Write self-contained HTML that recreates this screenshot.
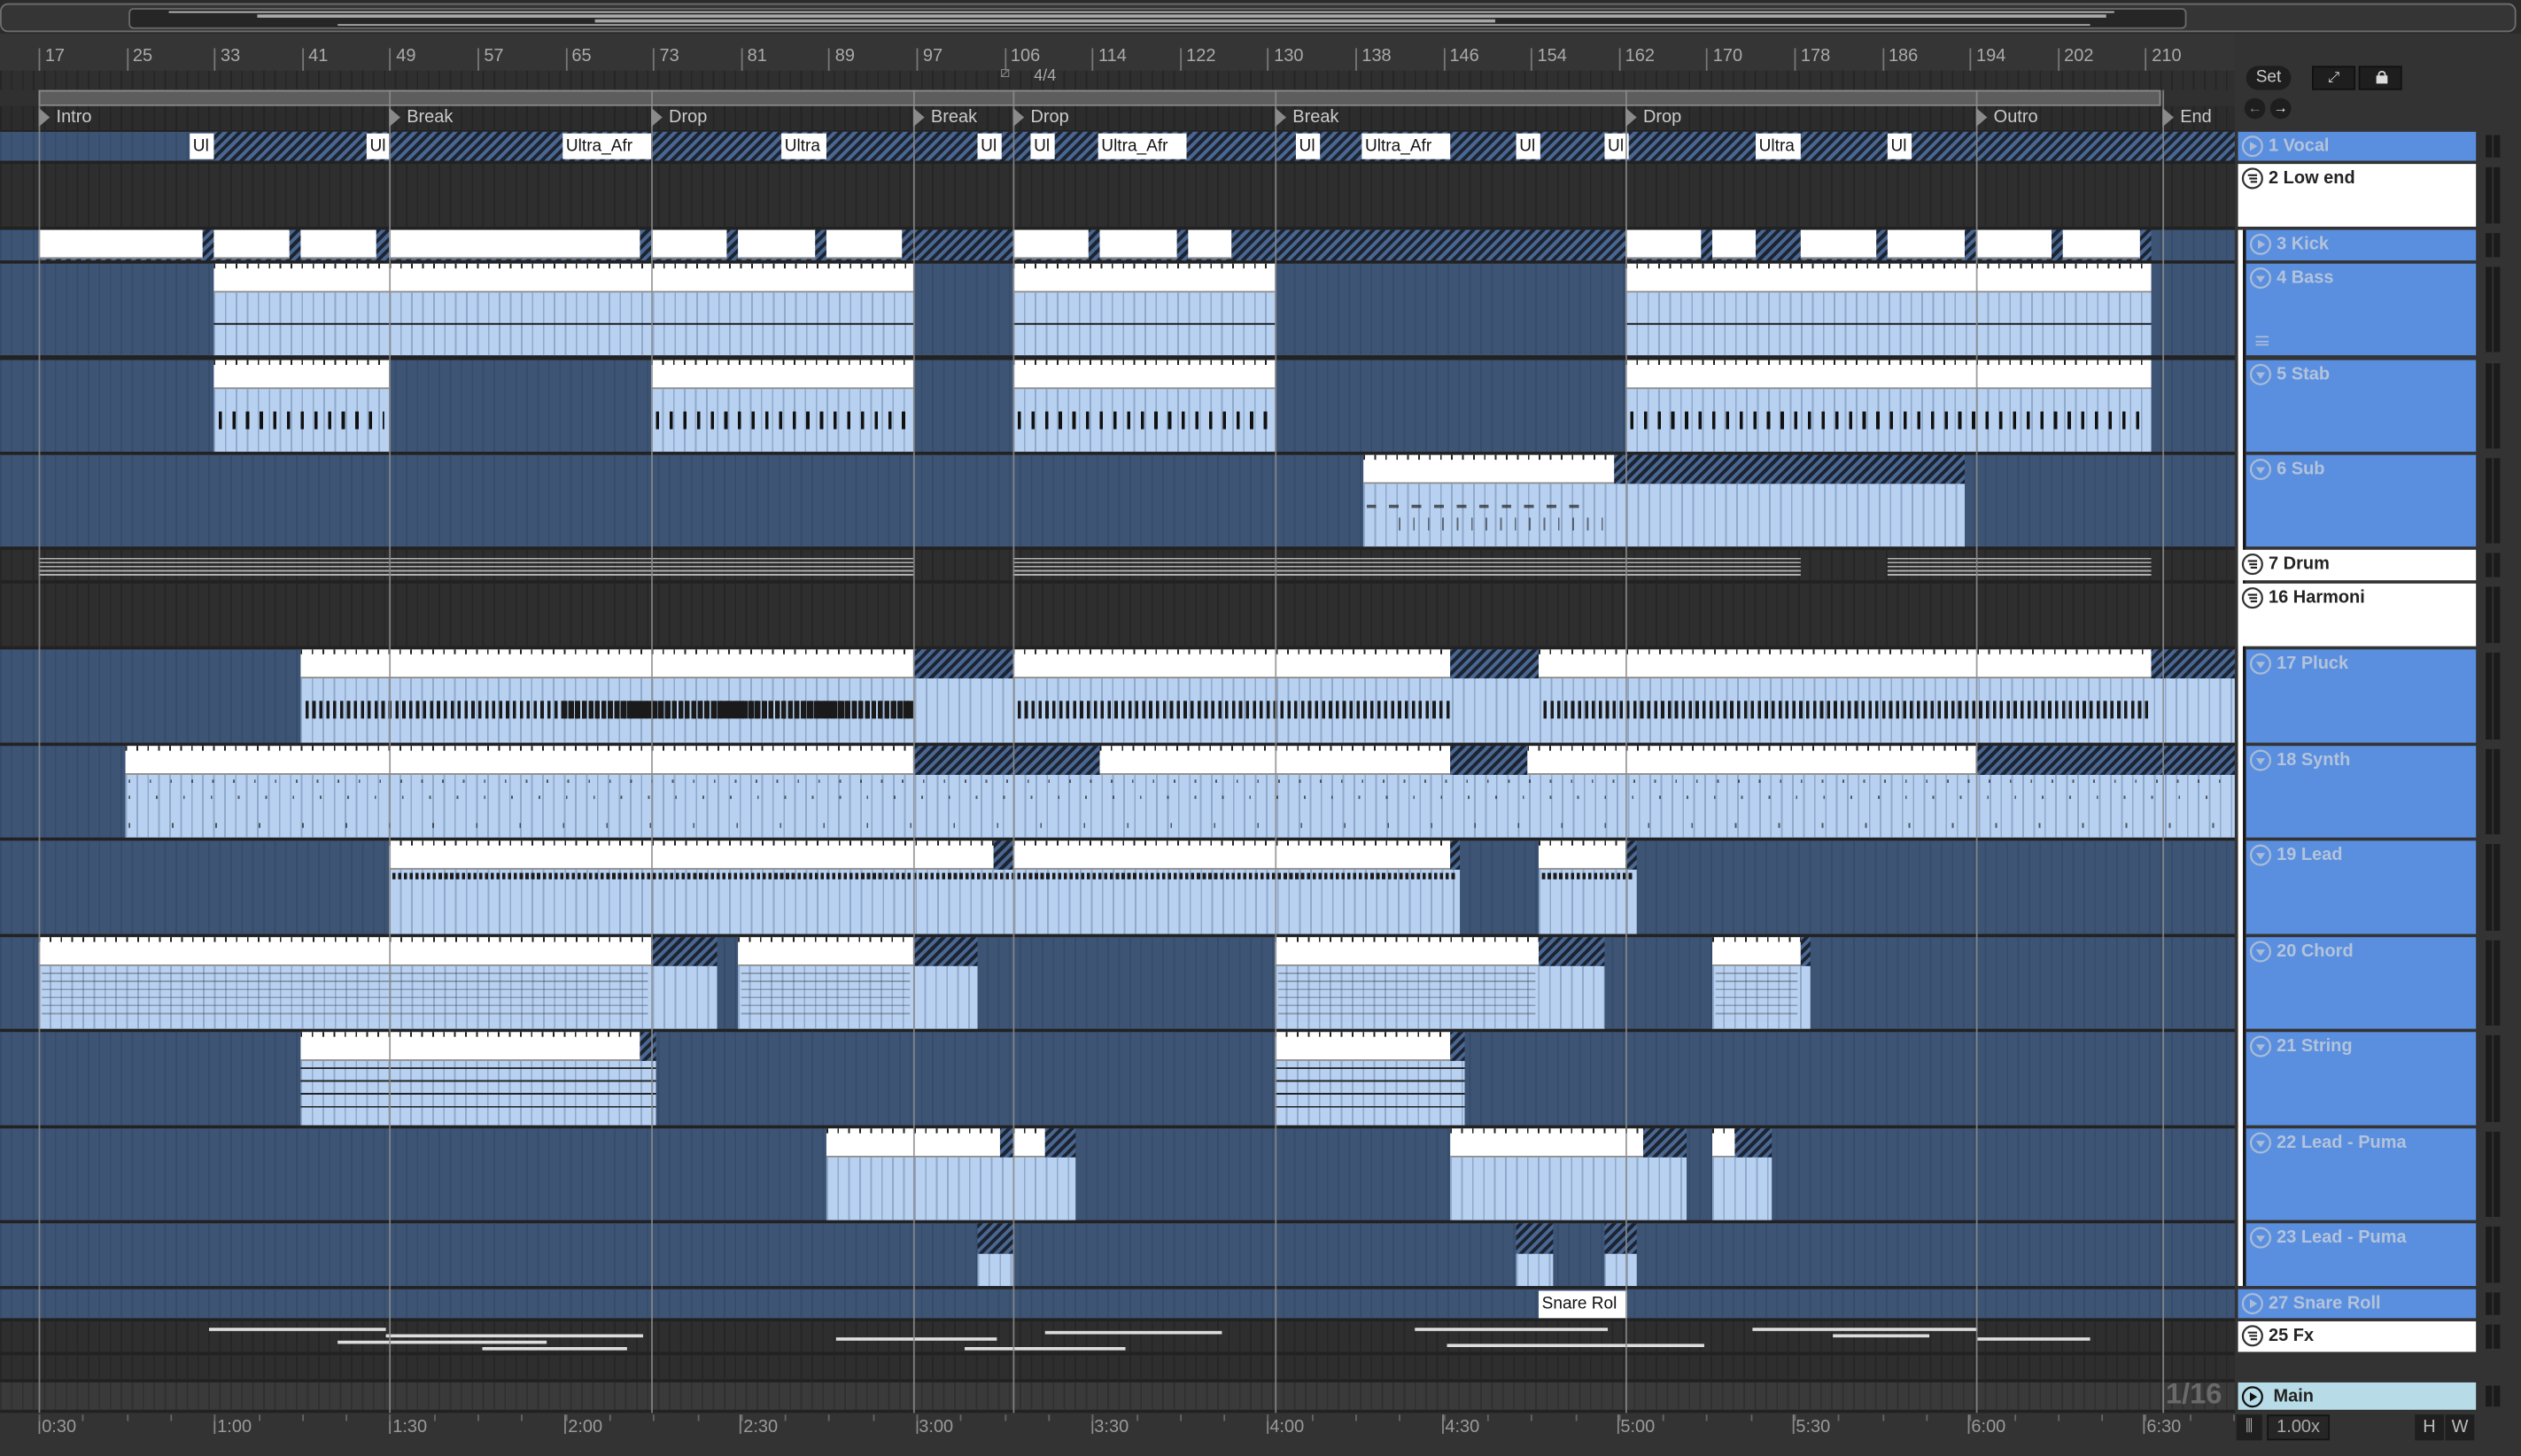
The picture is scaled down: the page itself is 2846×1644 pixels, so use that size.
<!DOCTYPE html>
<html><head><meta charset="utf-8">
<style>
html,body{margin:0;padding:0;background:#2d2d2d;overflow:hidden;width:2846px;height:1644px}
#app{position:absolute;left:0;top:0;width:1568px;height:906px;transform:scale(1.81505);transform-origin:0 0;background:#303030;font-family:"Liberation Sans",sans-serif;overflow:hidden}
.a{position:absolute;box-sizing:border-box}
.hatch{background:repeating-linear-gradient(-45deg,#1c2432 0 2.2px,#4a6791 2.2px 4.4px)}
.blue{background:#3d5475 repeating-linear-gradient(90deg,#364c6b 0 1px,transparent 1px 6.82px)}
.dark{background:#2e2e2e repeating-linear-gradient(90deg,#262626 0 1px,transparent 1px 6.82px)}
.body{background:#b8d1f1 repeating-linear-gradient(90deg,#8fa9cb 0 1px,transparent 1px 6.82px)}
.hdr{background:#fff;border-bottom:1.5px solid #8a8a8a}
.lbl{font-size:10.5px;color:#111;line-height:17px;padding-left:2px;white-space:nowrap;overflow:hidden}
.th{color:#b7c4d8;font-weight:bold;font-size:11px;white-space:nowrap}
</style></head><body>
<div id="app">
<div class="a" style="left:0;top:0;width:1568px;height:21px;background:#2b2b2b"></div>
<div class="a" style="left:0;top:2px;width:1565px;height:18px;border:1.5px solid #6e6e6e;border-radius:5px;background:#353535"></div>
<div class="a" style="left:80px;top:5px;width:1280px;height:13px;background:#262626;border-radius:3px;border:1.5px solid #6a6a6a"></div>
<div class="a" style="left:105px;top:7px;width:1210px;height:1px;background:#bbb"></div>
<div class="a" style="left:160px;top:9px;width:1150px;height:2px;background:#ccc;opacity:.8"></div>
<div class="a" style="left:370px;top:12px;width:560px;height:2px;background:#ddd;opacity:.7"></div>
<div class="a" style="left:210px;top:15px;width:1090px;height:1px;background:#aaa"></div>
<div class="a" style="left:0;top:21px;width:1392px;height:34px;background:#353535"></div>
<div class="a" style="left:0;top:44px;width:1392px;height:12px;background:#2f2f2f repeating-linear-gradient(90deg,#262626 0 1px,transparent 1px 6.82px)"></div>
<div id="ruler"></div>
<div class="a" style="left:24px;top:56px;width:1320px;height:10px;background:#5d5d5d;border:1px solid #8a8a8a"></div>
<div class="a" style="left:0;top:66px;width:1392px;height:15px;background:#2c2c2c repeating-linear-gradient(90deg,#242424 0 1px,transparent 1px 6.82px)"></div>
<div id="loc"></div>
<div id="lanes"></div>
<div id="clips"></div>
<div id="vlines"></div>
<div class="a" style="left:0;top:879px;width:1392px;height:27px;background:#333"></div>
<div id="bot"></div>
<div class="a" style="left:1390px;top:21px;width:178px;height:885px;background:#333"></div>
<div class="a" style="left:1397px;top:41px;width:28px;height:15px;border-radius:8px;background:#1e1e1e;color:#ccc;font-size:10.5px;text-align:center;line-height:15px">Set</div>
<div class="a" style="left:1438px;top:41px;width:27px;height:15px;background:#1e1e1e;border:1px solid #111;color:#ddd;font-size:9px;text-align:center;line-height:13px">⤢</div>
<div class="a" style="left:1467px;top:41px;width:27px;height:15px;background:#1e1e1e;border:1px solid #111"><div class="a" style="left:10px;top:5px;width:7px;height:5px;background:#ddd"></div><div class="a" style="left:11px;top:2px;width:5px;height:5px;border:1.3px solid #ddd;border-bottom:none;border-radius:3px 3px 0 0"></div></div>
<div class="a" style="left:1396px;top:61px;width:13px;height:13px;border-radius:50%;background:#1e1e1e;color:#888;font-size:9px;text-align:center;line-height:13px">←</div>
<div class="a" style="left:1412px;top:61px;width:13px;height:13px;border-radius:50%;background:#1e1e1e;color:#eee;font-size:9px;text-align:center;line-height:13px">→</div>
<div id="heads"></div>
<div class="a" style="left:1391px;top:880px;width:16px;height:16px;background:#1f1f1f;color:#aaa;font-size:10px;text-align:center;line-height:16px">⫼</div>
<div class="a" style="left:1410px;top:880px;width:39px;height:16px;background:#262626;border:1px solid #151515;color:#aaa;font-size:11px;text-align:center;line-height:14px">1.00x</div>
<div class="a" style="left:1502px;top:880px;width:18px;height:16px;background:#1f1f1f;color:#bbb;font-size:11px;text-align:center;line-height:16px">H</div>
<div class="a" style="left:1521px;top:880px;width:18px;height:16px;background:#1f1f1f;color:#bbb;font-size:11px;text-align:center;line-height:16px">W</div>
<div class="a" style="left:1347px;top:857px;width:42px;height:22px;color:#6a6a6a;font-size:18px;font-weight:bold">1/16</div>
</div>
<script>
function E(id,x,y,w,h,cls,st,txt){var d=document.createElement('div');d.className='a '+(cls||'');d.style.cssText='left:'+x+'px;top:'+y+'px;width:'+w+'px;height:'+h+'px;'+(st||'');if(txt)d.textContent=txt;document.getElementById(id).appendChild(d);return d}
var nums=[17,25,33,41,49,57,65,73,81,89,97,106,114,122,130,138,146,154,162,170,178,186,194,202,210];
nums.forEach(function(n,i){var x=24+i*54.6;E('ruler',x,30,1,14,'','background:#777');E('ruler',x+4,29,30,14,'','color:#aaa;font-size:11px',''+n)});
E('ruler',622,40,18,14,'','color:#888;font-size:10px','⧄');E('ruler',643,42,24,12,'','color:#aaa;font-size:10px','4/4');
[['Intro',24],['Break',242],['Drop',405],['Break',568],['Drop',630],['Break',793],['Drop',1011],['Outro',1229],['End',1345]].forEach(function(l){
E('loc',l[1],67,0,0,'','border-left:7px solid #8a8a8a;border-top:6px solid transparent;border-bottom:6px solid transparent;');
E('loc',l[1]+11,66,60,15,'','color:#ccc;font-size:11px;line-height:15px',l[0]);});
var T=[[82,100,'b'],[102,141,'d'],[143,162,'b'],[164,221,'b'],[224,281,'b'],[283,340,'b'],[342,361,'d'],[363,402,'d'],[404,462,'b'],[464,521,'b'],[523,581,'b'],[583,640,'b'],[642,700,'b'],[702,759,'b'],[761,800,'b'],[802,820,'b'],[822,841,'d'],[843,858,'d'],[860,877,'m']];
E('lanes',0,81,1392,798,'','background:#222');
T.forEach(function(t){E('lanes',0,t[0],1390,t[1]-t[0],t[2]=='b'?'blue':'dark',t[2]=='m'?'background:#3a3a3a repeating-linear-gradient(90deg,#303030 0 1px,transparent 1px 6.82px)':'')});
function H(x1,x2,y,h){E('clips',x1,y,x2-x1,h,'hatch')}
function W(x1,x2,y,h,t){E('clips',x1,y,x2-x1,h,'hdr lbl','background:#fff repeating-linear-gradient(90deg,#222 0 1px,transparent 1px 6.82px) top/100% 3px no-repeat',t||'')}
function B(x1,x2,y,h,ex){E('clips',x1,y,x2-x1,h,'body',ex||'')}
H(133,1390,82,18);
[[118,15,'Ul'],[228,14,'Ul'],[350,55,'Ultra_Afr'],[486,28,'Ultra'],[608,15,'Ul'],[641,15,'Ul'],[683,55,'Ultra_Afr'],[806,15,'Ul'],[847,55,'Ultra_Afr'],[943,15,'Ul'],[998,15,'Ul'],[1092,28,'Ultra'],[1174,15,'Ul']].forEach(function(c){E('clips',c[0],83,c[1],16,'lbl','background:#fff;line-height:16px;font-size:10.5px',c[2])});
H(24,1338,143,19);
[[24,126],[133,180],[187,234],[242,398],[405,452],[459,507],[514,561],[630,677],[684,732],[739,766],[1011,1058],[1065,1092],[1120,1167],[1174,1222],[1229,1276],[1283,1331]].forEach(function(c){E('clips',c[0],143,c[1]-c[0],18,'','background:#fff;border-bottom:1.5px solid #888')});
E('clips',766,143,245,19,'hatch');E('clips',568,143,62,19,'hatch');
[[133,568],[630,793],[1011,1338]].forEach(function(c){W(c[0],c[1],164,18);B(c[0],c[1],182,39,'background-image:linear-gradient(#111,#111),repeating-linear-gradient(90deg,#8fa9cb 0 1px,transparent 1px 6.82px);background-size:100% 1.2px,auto;background-position:0 50%,0 0;background-repeat:no-repeat,repeat')});
[[133,242],[405,568],[630,793],[1011,1338]].forEach(function(c){W(c[0],c[1],224,18);B(c[0],c[1],242,39);E('clips',c[0]+3,256,c[1]-c[0]-6,11,'','background:repeating-linear-gradient(90deg,#111 0 2px,transparent 2px 8.5px)')});
W(848,1004,283,18);H(1004,1222,283,18);B(848,1222,301,39);
E('clips',850,314,140,2,'','background:repeating-linear-gradient(90deg,#222 0 6px,transparent 6px 14px);opacity:.7');
E('clips',870,322,130,8,'','background:repeating-linear-gradient(90deg,#222 0 1px,transparent 1px 9px);opacity:.6');
[[24,568],[630,1120],[1174,1338]].forEach(function(c){E('clips',c[0],347,c[1]-c[0],12,'','background:repeating-linear-gradient(#ddd 0 1px,transparent 1px 2.5px);opacity:.75')});
B(187,1390,422,40);W(187,568,404,18);H(568,630,404,18);W(630,902,404,18);H(902,957,404,18);W(957,1338,404,18);H(1338,1390,404,18);
[[190,568],[633,902],[960,1338]].forEach(function(c){E('clips',c[0],436,c[1]-c[0],11,'','background:repeating-linear-gradient(90deg,#1a1a1a 0 2px,transparent 2px 4.3px)')});
E('clips',350,436,218,11,'','background:repeating-linear-gradient(90deg,#1a1a1a 0 3px,transparent 3px 4px)');
B(78,1390,482,39);W(78,568,464,18);H(568,684,464,18);W(684,902,464,18);H(902,950,464,18);W(950,1229,464,18);H(1229,1390,464,18);
E('clips',80,485,1305,30,'','opacity:.7;background:repeating-linear-gradient(90deg,#222 0 1px,transparent 1px 13px) 0 0/100% 2px no-repeat,repeating-linear-gradient(90deg,#222 0 1px,transparent 1px 17px) 0 10px/100% 2px no-repeat,repeating-linear-gradient(90deg,#222 0 1px,transparent 1px 27px) 0 27px/100% 3px no-repeat');
W(242,618,523,18);H(618,630,523,18);W(630,902,523,18);H(902,908,523,18);B(242,908,541,40);
W(957,1011,523,18);H(1011,1018,523,18);B(957,1018,541,40);
[[244,905],[959,1016]].forEach(function(c){E('clips',c[0],543,c[1]-c[0],4,'','background:repeating-linear-gradient(90deg,#1a1a1a 0 2px,transparent 2px 3.6px)')});
[[24,405,446],[459,568,608],[793,957,998],[1065,1120,1126]].forEach(function(c){W(c[0],c[1],583,18);H(c[1],c[2],583,18);B(c[0],c[2],601,39);E('clips',c[0]+2,605,c[1]-c[0]-4,30,'','background:repeating-linear-gradient(#333 0 1px,transparent 1px 5px);opacity:.35')});
[[187,398,408],[793,902,911]].forEach(function(c){W(c[0],c[1],642,18);H(c[1],c[2],642,18);B(c[0],c[2],660,40);E('clips',c[0],664,c[2]-c[0],32,'','background:repeating-linear-gradient(#222 0 1px,transparent 1px 8px)')});
W(514,622,702,18);H(622,630,702,18);W(630,650,702,18);H(650,669,702,18);B(514,669,720,39);
W(902,1022,702,18);H(1022,1049,702,18);B(902,1049,720,39);
W(1065,1079,702,18);H(1079,1102,702,18);B(1065,1102,720,39);
[[608,630],[943,966],[998,1018]].forEach(function(c){H(c[0],c[1],761,19);B(c[0],c[1],780,20)});
E('clips',957,803,55,17,'lbl','background:#fff;line-height:17px','Snare Rol');
[[130,240,826],[240,400,830],[210,340,834],[520,620,832],[650,760,828],[880,1000,826],[900,1060,836],[1090,1230,826],[1140,1200,830],[1230,1300,832],[300,390,838],[600,700,838]].forEach(function(c){E('clips',c[0],c[2],c[1]-c[0],1.5,'','background:#ddd')});
[24,242,405,568,630,793,1011,1229,1345].forEach(function(x){E('vlines',x,56,1,823,'','background:#8c8c8c;opacity:.85')});
['0:30','1:00','1:30','2:00','2:30','3:00','3:30','4:00','4:30','5:00','5:30','6:00','6:30'].forEach(function(t,i){var x=24+i*109.1;E('bot',x,880,1,12,'','background:#888');E('bot',x+2,882,30,14,'','color:#9a9a9a;font-size:11px',t)});
for(var i=0;i<52;i++){E('bot',24+i*27.3,880,1,4,'','background:#666')}
var HD=[[82,100,'b','1 Vocal',0,'p'],[102,141,'w','2 Low end',0,'g'],[143,162,'b','3 Kick',1,'p'],[164,221,'b','4 Bass',1,'v'],[224,281,'b','5 Stab',1,'v'],[283,340,'b','6 Sub',1,'v'],[342,361,'w','7 Drum',0,'g'],[363,402,'w','16 Harmoni',0,'g'],[404,462,'b','17 Pluck',1,'v'],[464,521,'b','18 Synth',1,'v'],[523,581,'b','19 Lead',1,'v'],[583,640,'b','20 Chord',1,'v'],[642,700,'b','21 String',1,'v'],[702,759,'b','22 Lead - Puma',1,'v'],[761,800,'b','23 Lead - Puma',1,'v'],[802,820,'b','27 Snare Roll',0,'p'],[822,841,'w','25 Fx',0,'g'],[860,877,'m','Main',0,'m']];
E('heads',1392,143,5,657,'','background:#fff;border-right:2px solid #1a1a1a');
HD.forEach(function(h){var x=h[4]?1397:1392,y=h[0],hh=h[1]-h[0];
var bg=h[2]=='b'?'#5a8fdf':h[2]=='w'?'#fff':'#b7dce7';
var d=E('heads',x,y,1540-x,hh,'','background:'+bg);
var col=h[2]=='b'?'#b3c3db':'#222';
var ic=h[2]=='b'?'#a9bbd6':'#333';
var inner=h[5]=='p'||h[5]=='m'?'<path d="M5.2 4 L9.6 6.75 L5.2 9.5 Z" fill="'+(h[5]=='m'?'#111':ic)+'"/>':h[5]=='v'?'<path d="M4 5.5 L9.5 5.5 L6.75 9.5 Z" fill="'+ic+'"/>':'<path d="M4 4.8 H9.5 M4.8 6.8 H9.5 M5.6 8.8 H9.5" stroke="#222" stroke-width="1.1"/>';
d.innerHTML='<svg style="position:absolute;left:2px;top:'+(h[2]=='m'?2:1.5)+'px" width="14" height="14" viewBox="0 0 13.5 13.5"><circle cx="6.75" cy="6.75" r="5.8" fill="none" stroke="'+(h[5]=='m'?'#111':ic)+'" stroke-width="1.2"/>'+inner+'</svg><div class="a th" style="left:'+(h[2]=='m'?22:19)+'px;top:2.5px;color:'+col+'">'+h[3]+'</div>';
E('heads',1546,y+2,4,hh-4,'','background:#1b1b1b');E('heads',1551,y+2,4,hh-4,'','background:#1b1b1b');
});
E('heads',1403,209,8,6,'','border-top:1px solid #a9bbd6;border-bottom:1px solid #a9bbd6;background:linear-gradient(#a9bbd6,#a9bbd6) 0 2px/100% 1px no-repeat');
</script>
</body></html>
